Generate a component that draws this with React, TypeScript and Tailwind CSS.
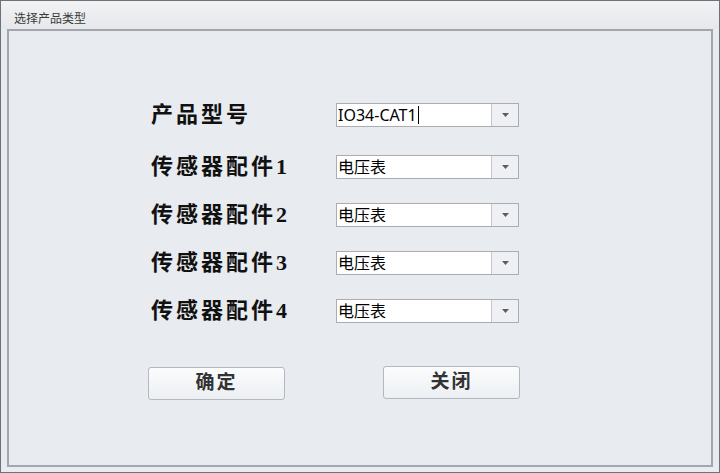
import React from "react";

const labelFont = { fontFamily: '"Liberation Serif", "Noto Sans CJK SC", serif' };

function Combo({ value, caret }: { value: string; caret?: boolean }) {
  return (
    <div className="flex h-[24px] w-[183px] border border-[#abadb3] bg-white">
      <div className="flex flex-1 items-center pl-[1px] text-[16px] leading-none text-black font-['Noto_Sans','Noto_Sans_CJK_SC',sans-serif]">
        <span>{value}</span>
        {caret && <span className="ml-[1px] inline-block h-[18px] w-[1px] bg-black" />}
      </div>
      <div className="flex w-[27px] items-center justify-center border-l border-[#c4c7cc] bg-[#eef0f3]">
        <svg width="7" height="4" viewBox="0 0 7 4">
          <path d="M0 0 L7 0 L3.5 4 Z" fill="#5a5d62" />
        </svg>
      </div>
    </div>
  );
}

function Row({ label, value, caret, mt }: { label: string; value: string; caret?: boolean; mt: string }) {
  return (
    <div className={`flex h-[24px] items-center ${mt}`}>
      <div
        className="w-[185px] text-[22px] font-bold leading-none tracking-[3px] text-[#111]"
        style={labelFont}
      >
        {label}
      </div>
      <Combo value={value} caret={caret} />
    </div>
  );
}

function Btn({ text }: { text: string }) {
  return (
    <div
      className="flex h-[33px] w-[137px] items-center justify-center rounded-[3px] border border-[#b4b8be] bg-gradient-to-b from-[#fbfcfd] to-[#eceff3] text-[19px] font-bold tracking-[2px] text-[#333]"
      style={labelFont}
    >
      {text}
    </div>
  );
}

export default function App() {
  return (
    <div className="flex h-[473px] w-[720px] flex-col border border-[#6d7278] bg-[#e8ebef]">
      <div className="flex h-[28px] items-center bg-gradient-to-b from-[#f1f2f4] to-[#e6e8eb] pl-[13px] pt-[6px] text-[12px] text-[#3a3a3a] font-['Noto_Sans_CJK_SC',sans-serif]">
        选择产品类型
      </div>
      <div className="mx-[6px] mb-[5px] flex-1 border-2 border-[#a3a7ad] bg-[#e8ebef]">
        <div className="flex flex-col pl-[142px] pt-[72px]">
          <Row label="产品型号" value="IO34-CAT1" caret mt="" />
          <Row label="传感器配件1" value="电压表" mt="mt-[28px]" />
          <Row label="传感器配件2" value="电压表" mt="mt-[24px]" />
          <Row label="传感器配件3" value="电压表" mt="mt-[24px]" />
          <Row label="传感器配件4" value="电压表" mt="mt-[24px]" />
          <div className="mt-[43px] ml-[-3px] flex items-start gap-[98px]">
            <div className="mt-[1px]">
              <Btn text="确定" />
            </div>
            <Btn text="关闭" />
          </div>
        </div>
      </div>
    </div>
  );
}
